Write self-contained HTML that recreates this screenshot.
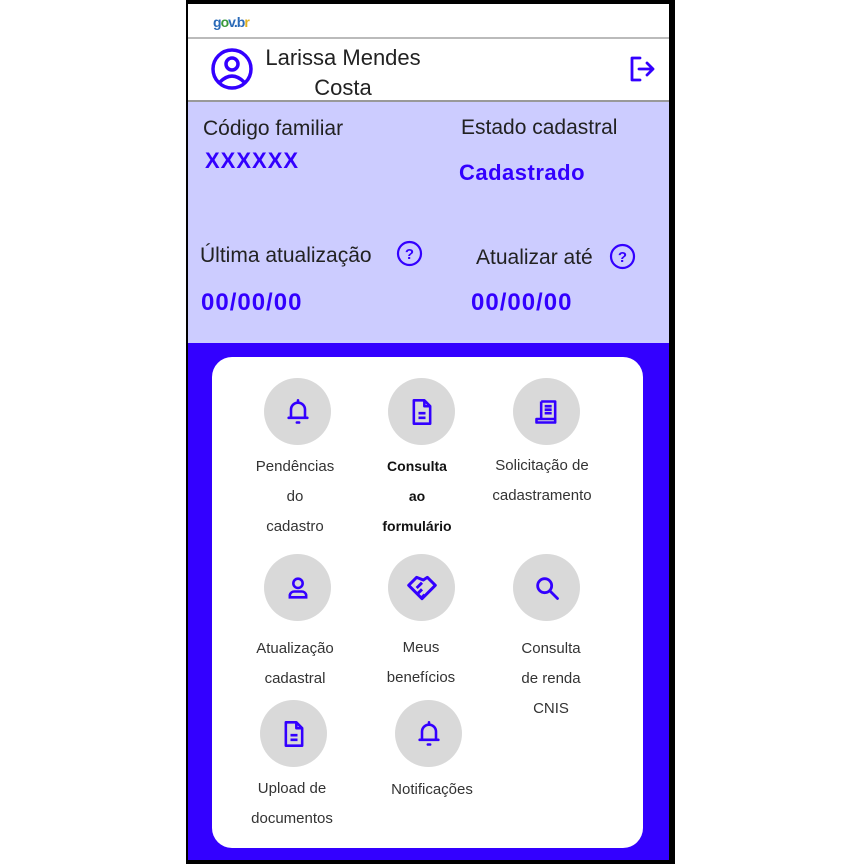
<!DOCTYPE html>
<html><head><meta charset="utf-8"><style>
*{margin:0;padding:0;box-sizing:border-box}
body{width:864px;height:864px;background:#fff;position:relative;overflow:hidden;font-family:"Liberation Sans",sans-serif;color:#222}
.a{position:absolute}
.ph{left:186px;top:0;width:489px;height:864px;background:#000}
.c{border-radius:50%;background:#d9d9d9;width:67px;height:67px;display:flex;align-items:center;justify-content:center}
.l{text-align:center;font-size:15px;line-height:30px;color:#333;width:140px}
.h{font-size:21px;color:#222}
.v{font-size:22px;font-weight:bold;color:#3300ff}
</style></head><body>
<div class="a ph"></div>
<div class="a" style="left:188px;top:4px;width:481px;height:856px;background:#fff"></div>
<div class="a" style="left:213px;top:14px;font-size:14px;font-weight:bold;letter-spacing:-1px"><span style="color:#2a6ab8">g</span><span style="color:#3a9a3a">o</span><span style="color:#2a6ab8">v</span><span style="color:#2a6ab8">.</span><span style="color:#2a6ab8">b</span><span style="color:#e0b020">r</span></div>
<div class="a" style="left:188px;top:37px;width:481px;height:2px;background:#bbb"></div>
<svg class="a" style="left:210px;top:47px" width="44" height="44" viewBox="0 0 44 44"><circle cx="22" cy="22" r="19" fill="none" stroke="#3300ff" stroke-width="3.5"/><circle cx="22" cy="17" r="6" fill="none" stroke="#3300ff" stroke-width="3.5"/><path d="M10 35 Q22 23 34 35" fill="none" stroke="#3300ff" stroke-width="3.5"/></svg>
<div class="a" style="left:243px;top:43px;width:200px;text-align:center;font-size:22px;line-height:30px;color:#222">Larissa Mendes<br>Costa</div>
<svg class="a" style="left:629px;top:56px" width="28" height="26" viewBox="0 0 28 26"><path d="M11 2H3v22h8M10 13h14M18 7l6 6-6 6" fill="none" stroke="#3300ff" stroke-width="2.8" stroke-linecap="round" stroke-linejoin="round"/></svg>
<div class="a" style="left:188px;top:100px;width:481px;height:2px;background:#999"></div>
<div class="a" style="left:188px;top:102px;width:481px;height:241px;background:#ccccff"></div>
<div class="a h" style="left:203px;top:117px">Código familiar</div>
<div class="a v" style="left:205px;top:148px;letter-spacing:1px">XXXXXX</div>
<div class="a h" style="left:461px;top:116px">Estado cadastral</div>
<div class="a v" style="left:459px;top:160px;letter-spacing:0.5px">Cadastrado</div>
<div class="a h" style="left:200px;top:244px">Última atualização</div>
<div class="a h" style="left:476px;top:246px">Atualizar até</div>
<svg class="a" style="left:396px;top:240px" width="27" height="27" viewBox="0 0 27 27"><circle cx="13.5" cy="13.5" r="11.5" fill="none" stroke="#3300ff" stroke-width="2.2"/><text x="13.5" y="19" text-anchor="middle" font-size="15" font-weight="bold" fill="#3300ff" font-family="Liberation Sans">?</text></svg>
<svg class="a" style="left:609px;top:243px" width="27" height="27" viewBox="0 0 27 27"><circle cx="13.5" cy="13.5" r="11.5" fill="none" stroke="#3300ff" stroke-width="2.2"/><text x="13.5" y="19" text-anchor="middle" font-size="15" font-weight="bold" fill="#3300ff" font-family="Liberation Sans">?</text></svg>
<div class="a v" style="left:201px;top:289px;font-size:24px;letter-spacing:1px">00/00/00</div>
<div class="a v" style="left:471px;top:289px;font-size:24px;letter-spacing:1px">00/00/00</div>
<div class="a" style="left:188px;top:343px;width:481px;height:517px;background:#3300ff"></div>
<div class="a" style="left:212px;top:357px;width:431px;height:491px;background:#fff;border-radius:20px"></div>

<div class="a c" style="left:264px;top:378px"><svg width="28" height="28" viewBox="0 0 24 24" fill="none" stroke="#3300ff" stroke-width="2.2" stroke-linecap="round" stroke-linejoin="round"><path d="M6 17V10a6 6 0 0112 0v7M4 17h16M11 21h2M12 2v2"/></svg></div>
<div class="a c" style="left:388px;top:378px"><svg width="28" height="28" viewBox="0 0 24 24" fill="none" stroke="#3300ff" stroke-width="2.2" stroke-linejoin="round"><path d="M5 2h9l5 5v15H5zM14 2v5h5M9 13h6M9 17h6"/></svg></div>
<div class="a c" style="left:513px;top:378px"><svg width="28" height="28" viewBox="0 0 24 24" fill="none" stroke="#3300ff" stroke-width="2.2" stroke-linejoin="round"><path d="M7 3h12v15M7 3v15M3 18h16v3H3zM10 7h6M10 10h6M10 13h6"/></svg></div>
<div class="a l" style="left:225px;top:452px">Pendências<br>do<br>cadastro</div>
<div class="a l" style="left:347px;top:451px;font-weight:bold;color:#111;font-size:14px">Consulta<br>ao<br>formulário</div>
<div class="a l" style="left:472px;top:451px">Solicitação de<br>cadastramento</div>

<div class="a c" style="left:264px;top:554px"><svg width="28" height="28" viewBox="0 0 24 24" fill="none" stroke="#3300ff" stroke-width="2.2"><circle cx="12" cy="8" r="4"/><path d="M5 20v-2a4 4 0 014-3h6a4 4 0 014 3v2z"/></svg></div>
<div class="a c" style="left:388px;top:554px"><svg width="32" height="32" viewBox="0 0 24 24" fill="none" stroke="#3300ff" stroke-width="2.2" stroke-linejoin="round"><path d="M2 10l6-6 5 2 3-2 6 6-10 10zM8 12l4-4M9 16l3-3M12 19l2-2"/></svg></div>
<div class="a c" style="left:513px;top:554px"><svg width="28" height="28" viewBox="0 0 24 24" fill="none" stroke="#3300ff" stroke-width="2.4" stroke-linecap="round"><circle cx="10" cy="10" r="6"/><path d="M15 15l6 6"/></svg></div>
<div class="a l" style="left:225px;top:634px">Atualização<br>cadastral</div>
<div class="a l" style="left:351px;top:633px">Meus<br>benefícios</div>
<div class="a l" style="left:481px;top:634px">Consulta<br>de renda<br>CNIS</div>

<div class="a c" style="left:260px;top:700px"><svg width="28" height="28" viewBox="0 0 24 24" fill="none" stroke="#3300ff" stroke-width="2.2" stroke-linejoin="round"><path d="M5 2h9l5 5v15H5zM14 2v5h5M9 13h6M9 17h6"/></svg></div>
<div class="a c" style="left:395px;top:700px"><svg width="28" height="28" viewBox="0 0 24 24" fill="none" stroke="#3300ff" stroke-width="2.2" stroke-linecap="round" stroke-linejoin="round"><path d="M6 17V10a6 6 0 0112 0v7M4 17h16M11 21h2M12 2v2"/></svg></div>
<div class="a l" style="left:222px;top:774px">Upload de<br>documentos</div>
<div class="a l" style="left:362px;top:775px">Notificações</div>
</body></html>
